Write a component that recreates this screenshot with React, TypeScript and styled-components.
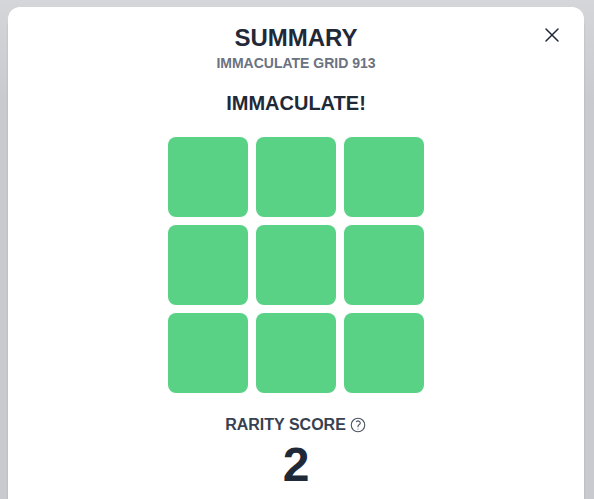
import React from "react";
import styled, { createGlobalStyle } from "styled-components";

const GlobalStyle = createGlobalStyle`
  *, *::before, *::after { box-sizing: border-box; }
  body {
    margin: 0;
    background: #d5d6d9;
    font-family: "Liberation Sans", Arial, sans-serif;
    color: #1f2937;
  }
`;

const Backdrop = styled.div`
  display: flex;
  min-height: 100vh;
  padding: 7px 10px 0 8px;
  background: linear-gradient(#d5d6d9, #c9cacf 100px);
`;

const Dialog = styled.main`
  position: relative;
  flex: 1;
  padding: 15px 16px 8px;
  display: flex;
  flex-direction: column;
  align-items: center;
  background: #fff;
  border-radius: 12px 12px 0 0;
  box-shadow: 0 8px 2px rgba(0, 0, 0, 0.18);
`;

const CloseButton = styled.button`
  position: absolute;
  top: 16px;
  right: 20px;
  display: flex;
  padding: 0;
  border: 0;
  background: none;
  color: #1f2937;
  cursor: pointer;
`;

const Title = styled.h1`
  margin: 0;
  font-size: 24px;
  line-height: 32px;
`;

const Subtitle = styled.p`
  margin: 0;
  font-size: 14px;
  font-weight: 700;
  line-height: 18px;
  color: #6b7280;
`;

const Verdict = styled.h2`
  margin: 17px 0 20px;
  font-size: 20px;
  line-height: 28px;
`;

const Grid = styled.div`
  display: grid;
  grid-template-columns: repeat(3, 80px);
  gap: 8px;
`;

const Cell = styled.div`
  height: 80px;
  border-radius: 8px;
  background: #5ad285;
`;

const ScoreLabel = styled.h3`
  display: flex;
  align-items: center;
  gap: 3px;
  margin: 20px 0 0;
  font-size: 16px;
  line-height: 24px;
  color: #374151;
`;

const HelpButton = styled.button`
  display: flex;
  padding: 0;
  border: 0;
  background: none;
  color: #4b5563;
  cursor: pointer;
`;

const Score = styled.p`
  margin: 4px 0 0;
  font-size: 48px;
  font-weight: 700;
  line-height: 48px;
`;

const CELLS = Array.from({ length: 9 }, (_, i) => i);

export default function App() {
  return (
    <>
      <GlobalStyle />
      <Backdrop>
        <Dialog role="dialog" aria-labelledby="summary-title">
          <CloseButton type="button" aria-label="Close">
            <svg width="24" height="24" viewBox="0 0 24 24" fill="none" stroke="currentColor" strokeWidth="1.5" strokeLinecap="round">
              <path d="M6 18 18 6M6 6l12 12" />
            </svg>
          </CloseButton>
          <Title id="summary-title">SUMMARY</Title>
          <Subtitle>IMMACULATE GRID 913</Subtitle>
          <Verdict>IMMACULATE!</Verdict>
          <Grid>
            {CELLS.map((cell) => (
              <Cell key={cell} />
            ))}
          </Grid>
          <ScoreLabel>
            RARITY SCORE
            <HelpButton type="button" aria-label="About rarity score">
              <svg width="18" height="18" viewBox="0 0 24 24" fill="none" stroke="currentColor" strokeWidth="1.5" strokeLinecap="round" strokeLinejoin="round">
                <path d="M9.879 7.519c1.171-1.025 3.071-1.025 4.242 0 1.172 1.025 1.172 2.687 0 3.712-.203.179-.43.326-.67.442-.745.361-1.45.999-1.45 1.827v.75M21 12a9 9 0 1 1-18 0 9 9 0 0 1 18 0Zm-9 5.25h.008v.008H12v-.008Z" />
              </svg>
            </HelpButton>
          </ScoreLabel>
          <Score>2</Score>
        </Dialog>
      </Backdrop>
    </>
  );
}
